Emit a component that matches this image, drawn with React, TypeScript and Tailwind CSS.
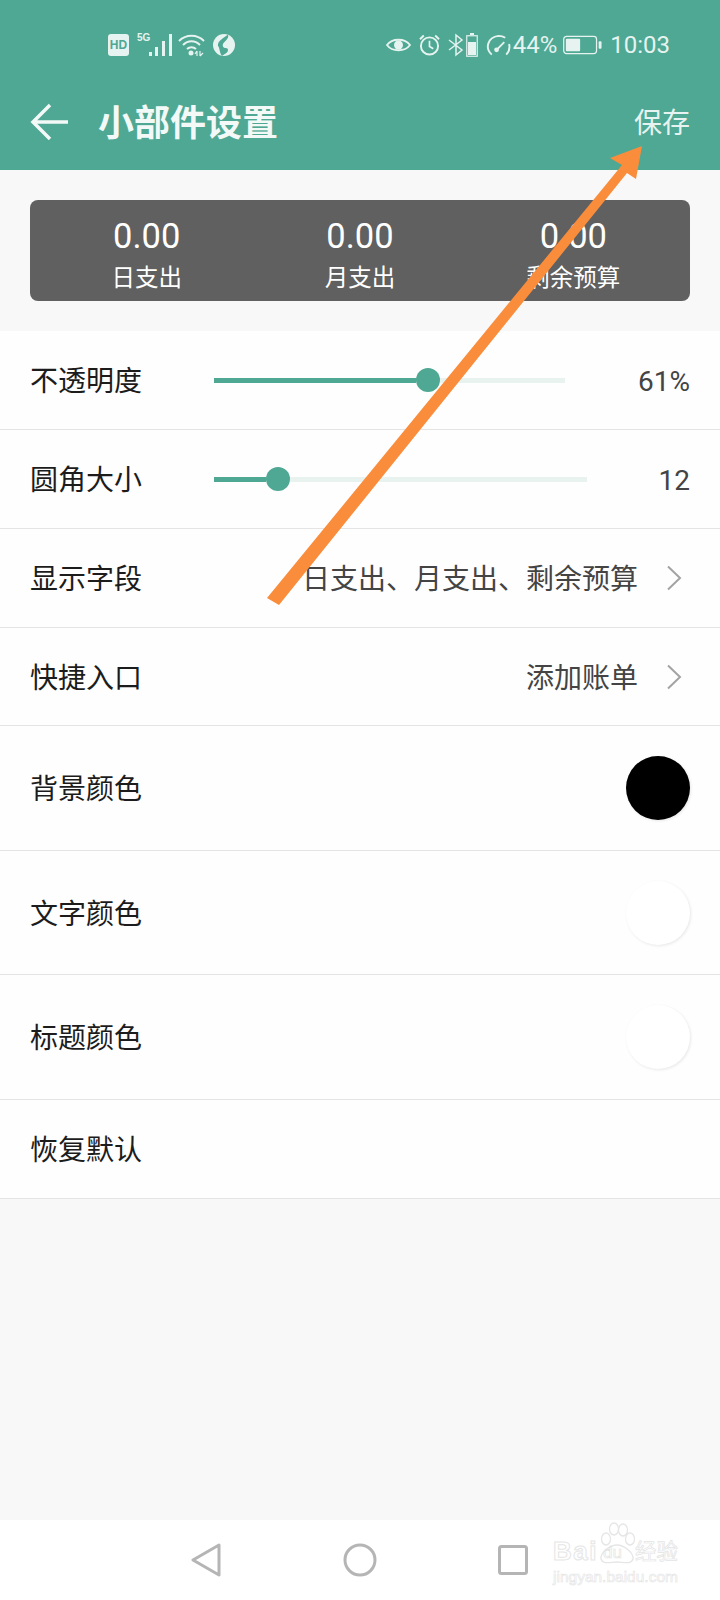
const Chevron = () => (
  <svg width="16" height="26" viewBox="0 0 16 26" fill="none" className="ml-[28px] mr-[8px]">
    <path d="M2 1.5 14 13 2 24.5" stroke="#a3a3a3" strokeWidth="2" />
  </svg>
);

const StatusLeft = () => (
  <div className="flex items-center">
    <div className="w-[21px] h-[22px] rounded-[3px] bg-[#e6f3f0] flex items-center justify-center text-[12px] leading-none font-bold text-[#4ea893] font-['Liberation_Sans',sans-serif]">
      HD
    </div>
    <div className="relative w-[35px] h-[22px] ml-[8px]">
      <span className="absolute left-0 top-[-1px] text-[10px] leading-none font-bold text-[#e6f3f0] font-['Liberation_Sans',sans-serif]">
        5G
      </span>
      <svg width="24" height="22" viewBox="0 0 24 22" fill="#e6f3f0" className="absolute left-[12px] top-0">
        <rect x="0" y="18" width="3" height="4" />
        <rect x="6" y="13" width="3" height="9" />
        <rect x="13" y="7" width="3" height="15" />
        <rect x="20" y="0" width="3" height="22" />
      </svg>
    </div>
    <svg width="27" height="24" viewBox="0 0 27 24" fill="none" className="ml-[6px]">
      <path d="M1 8C8 1 19 1 26 8" stroke="#e6f3f0" strokeWidth="2" />
      <path d="M5 12C10 7 17 7 22 12" stroke="#e6f3f0" strokeWidth="2" />
      <path d="M9 16C11.5 13.500 15.500 13.500 18 16" stroke="#e6f3f0" strokeWidth="2" />
      <circle cx="13" cy="20" r="2.500" fill="#e6f3f0" />
      <path d="M19 18v5M19 18l-2 3M22 23v-5M22 23l3-3" stroke="#e6f3f0" strokeWidth="1.200" />
    </svg>
    <svg width="22" height="22" viewBox="0 0 22 22" className="ml-[8px]">
      <circle cx="11" cy="11" r="11" fill="#e6f3f0" />
      <path d="M15 0.500C17 6 8 8 10 12.500 11 15 15 13 15 16 15 19 11 20 9 22 6 18 7 14 5 12 4 7 11 4 15 0.500Z" fill="#4ea893" />
    </svg>
  </div>
);

const StatusRight = () => (
  <div className="flex items-center text-[#e6f3f0]">
    <svg width="25" height="18" viewBox="0 0 25 18" fill="none">
      <path d="M1 9C6 2 19 2 24 9 19 16 6 16 1 9Z" stroke="#e6f3f0" strokeWidth="1.800" />
      <circle cx="12.500" cy="9" r="4.500" fill="#e6f3f0" />
    </svg>
    <svg width="21" height="24" viewBox="0 0 22 24" fill="none" className="ml-[8px]">
      <circle cx="11" cy="13" r="9" stroke="#e6f3f0" strokeWidth="2" />
      <path d="M11 7.500V13.500L15 16" stroke="#e6f3f0" strokeWidth="1.800" />
      <path d="M1 6 5 2M21 6 17 2" stroke="#e6f3f0" strokeWidth="2" />
    </svg>
    <svg width="16" height="24" viewBox="0 0 16 24" fill="none" className="ml-[8px]">
      <path d="M1 7 14 17 8 22V2L14 7 1 17" stroke="#e6f3f0" strokeWidth="1.500" />
    </svg>
    <svg width="12" height="24" viewBox="0 0 12 24" fill="none" className="ml-[2px]">
      <rect x="4" y="0" width="4" height="2" fill="#e6f3f0" />
      <rect x="0.750" y="2.750" width="10.500" height="20.500" stroke="#e6f3f0" strokeWidth="1.200" />
      <rect x="2" y="9" width="8" height="13" fill="#e6f3f0" />
    </svg>
    <svg width="25" height="22" viewBox="0 0 26 22" fill="none" className="ml-[8px]">
      <path d="M6 21C-1 15 1 3 13 1.500 16 1.500 18 2 20 3.500" stroke="#e6f3f0" strokeWidth="2" />
      <path d="M24 10C25 14 24 18 21 21" stroke="#e6f3f0" strokeWidth="2" />
      <path d="M11 16 19 8" stroke="#e6f3f0" strokeWidth="2" />
      <circle cx="11" cy="16" r="2.500" fill="#e6f3f0" />
    </svg>
    <span className="ml-[2px] text-[24px] leading-none">44%</span>
    <svg width="39" height="20" viewBox="0 0 41 20" fill="none" className="ml-[6px]">
      <rect x="0.750" y="1" width="34.500" height="18" rx="3" stroke="#e6f3f0" strokeWidth="1.300" />
      <rect x="3" y="3.500" width="15" height="13" rx="1" fill="#e6f3f0" />
      <rect x="37.500" y="6" width="3" height="8" rx="1" fill="#e6f3f0" />
    </svg>
    <span className="ml-[8px] text-[24px] leading-none">10:03</span>
  </div>
);

const Stat = ({ value, label }: { value: string; label: string }) => (
  <div className="flex flex-col items-center text-white">
    <div className="text-[34.500px] leading-[40px] mt-[16px]">{value}</div>
    <div className="text-[23.500px] leading-[30px] mt-[7px]">{label}</div>
  </div>
);

const Slider = ({ fill, rest }: { fill: string; rest: string }) => (
  <div className="flex items-center">
    <div className={`${fill} h-[5px] bg-[#4ea893]`} />
    <div className="w-[24px] h-[24px] rounded-full bg-[#4ea893]" />
    <div className={`${rest} h-[5px] bg-[#e8f3f0]`} />
  </div>
);

const Row = ({
  label,
  height,
  children,
}: {
  label: string;
  height: string;
  children?: React.ReactNode;
}) => (
  <div className={`${height} flex items-center pl-[30px] pr-[30px] border-b border-[#e4e4e4]`}>
    <div className="w-[184px] shrink-0 pt-[4px] text-[28px] text-[#1c1c1c]">{label}</div>
    <div className="flex-1 flex items-center justify-end min-w-0">{children}</div>
  </div>
);

const Swatch = ({ color }: { color: string }) => (
  <div className={`w-[64px] h-[64px] rounded-full ${color} shadow-[1px_1px_3px_rgba(0,0,0,0.09)]`} />
);

const Watermark = () => (
  <div className="absolute left-[552px] top-[1522px] w-[130px] h-[62px] pointer-events-none">
    <span className="absolute left-[1px] top-[15px] text-[26px] leading-[28px] font-bold tracking-[1.500px] text-transparent [-webkit-text-stroke:1px_#e6e6e6] font-['Liberation_Sans',sans-serif]">
      Bai
    </span>
    <svg width="40" height="43" viewBox="0 0 40 43" fill="none" className="absolute left-[45px] top-0">
      <ellipse cx="9" cy="17" rx="4.500" ry="6" stroke="#e6e6e6" strokeWidth="1.300" />
      <ellipse cx="17" cy="7" rx="4.500" ry="6" stroke="#e6e6e6" strokeWidth="1.300" />
      <ellipse cx="26" cy="8" rx="4.500" ry="6" stroke="#e6e6e6" strokeWidth="1.300" />
      <ellipse cx="33" cy="17" rx="4.500" ry="6" stroke="#e6e6e6" strokeWidth="1.300" />
      <path d="M20 23C13 23 3 31 4 37 6 43 14 40 20 40 26 40 34 43 36 37 37 31 27 23 20 23Z" stroke="#e6e6e6" strokeWidth="1.300" />
    </svg>
    <span className="absolute left-[51px] top-[22px] text-[17px] leading-[18px] text-transparent [-webkit-text-stroke:0.600px_#e2e2e2] font-['Liberation_Sans',sans-serif]">
      du
    </span>
    <span className="absolute left-[83px] top-[18px] text-[21.500px] leading-[24px] text-transparent [-webkit-text-stroke:0.700px_#e4e4e4]">
      经验
    </span>
    <span className="absolute left-[1px] top-[46px] text-[15.500px] leading-[18px] whitespace-nowrap text-transparent [-webkit-text-stroke:0.600px_#e4e4e4] font-['Liberation_Sans',sans-serif]">
      jingyan.baidu.com
    </span>
  </div>
);

export default function App() {
  return (
    <div className="relative w-[720px] h-[1600px] flex flex-col bg-[#f8f8f8] overflow-hidden font-['Roboto','Noto_Sans_CJK_SC',sans-serif]">
      <div className="h-[170px] shrink-0 bg-[#4ea893]">
        <div className="h-[90px] flex items-center justify-between pl-[108px] pr-[50px]">
          <StatusLeft />
          <StatusRight />
        </div>
        <div className="flex items-center pl-[30px] pr-[30px] h-[64px]">
          <svg width="40" height="38" viewBox="0 0 40 38" fill="none">
            <path d="M38 19H3M20 2 3 19 20 36" stroke="#f3f9f7" strokeWidth="3.500" />
          </svg>
          <div className="ml-[28px] pt-[4px] text-[36px] font-semibold text-[#f3f9f7]">小部件设置</div>
          <div className="ml-auto pt-[4px] text-[28px] text-[#e6f3f0]">保存</div>
        </div>
      </div>

      <div className="shrink-0 px-[30px] pt-[30px] pb-[30px]">
        <div className="h-[101px] rounded-[8px] bg-[#606060] grid grid-cols-3 px-[10px]">
          <Stat value="0.00" label="日支出" />
          <Stat value="0.00" label="月支出" />
          <Stat value="0.00" label="剩余预算" />
        </div>
      </div>

      <div className="shrink-0 bg-[#fefefe]">
        <Row label="不透明度" height="h-[99px]">
          <Slider fill="w-[202px]" rest="w-[125px]" />
          <div className="ml-auto pt-[4px] text-[28px] text-[#444]">61%</div>
        </Row>
        <Row label="圆角大小" height="h-[99px]">
          <Slider fill="w-[52px]" rest="w-[297px]" />
          <div className="ml-auto pt-[4px] text-[28px] text-[#444]">12</div>
        </Row>
        <Row label="显示字段" height="h-[99px]">
          <div className="pt-[4px] text-[28px] text-[#444] whitespace-nowrap">日支出、月支出、剩余预算</div>
          <Chevron />
        </Row>
        <Row label="快捷入口" height="h-[98px]">
          <div className="pt-[4px] text-[28px] text-[#444]">添加账单</div>
          <Chevron />
        </Row>
        <Row label="背景颜色" height="h-[125px]">
          <Swatch color="bg-black" />
        </Row>
        <Row label="文字颜色" height="h-[124px]">
          <Swatch color="bg-white" />
        </Row>
        <Row label="标题颜色" height="h-[125px]">
          <Swatch color="bg-white" />
        </Row>
        <Row label="恢复默认" height="h-[99px]" />
      </div>

      <div className="flex-1" />

      <div className="h-[80px] shrink-0 bg-white flex items-center pl-[191px]">
        <svg width="30" height="34" viewBox="0 0 30 34" fill="none">
          <path d="M28 2 2 17 28 32Z" stroke="#b5b5b5" strokeWidth="3" strokeLinejoin="round" />
        </svg>
        <svg width="34" height="34" viewBox="0 0 34 34" fill="none" className="ml-[122px]">
          <circle cx="17" cy="17" r="15" stroke="#b5b5b5" strokeWidth="3" />
        </svg>
        <svg width="30" height="30" viewBox="0 0 30 30" fill="none" className="ml-[121px]">
          <rect x="1.500" y="1.500" width="27" height="27" rx="2" stroke="#b5b5b5" strokeWidth="3" />
        </svg>
      </div>

      <Watermark />

      <svg width="720" height="1600" viewBox="0 0 720 1600" className="absolute left-0 top-0 pointer-events-none">
        <polygon
          points="267,598 622,165 610,158 642,146 636,179 627,173 279,605"
          fill="#f98d3c"
        />
      </svg>
    </div>
  );
}
